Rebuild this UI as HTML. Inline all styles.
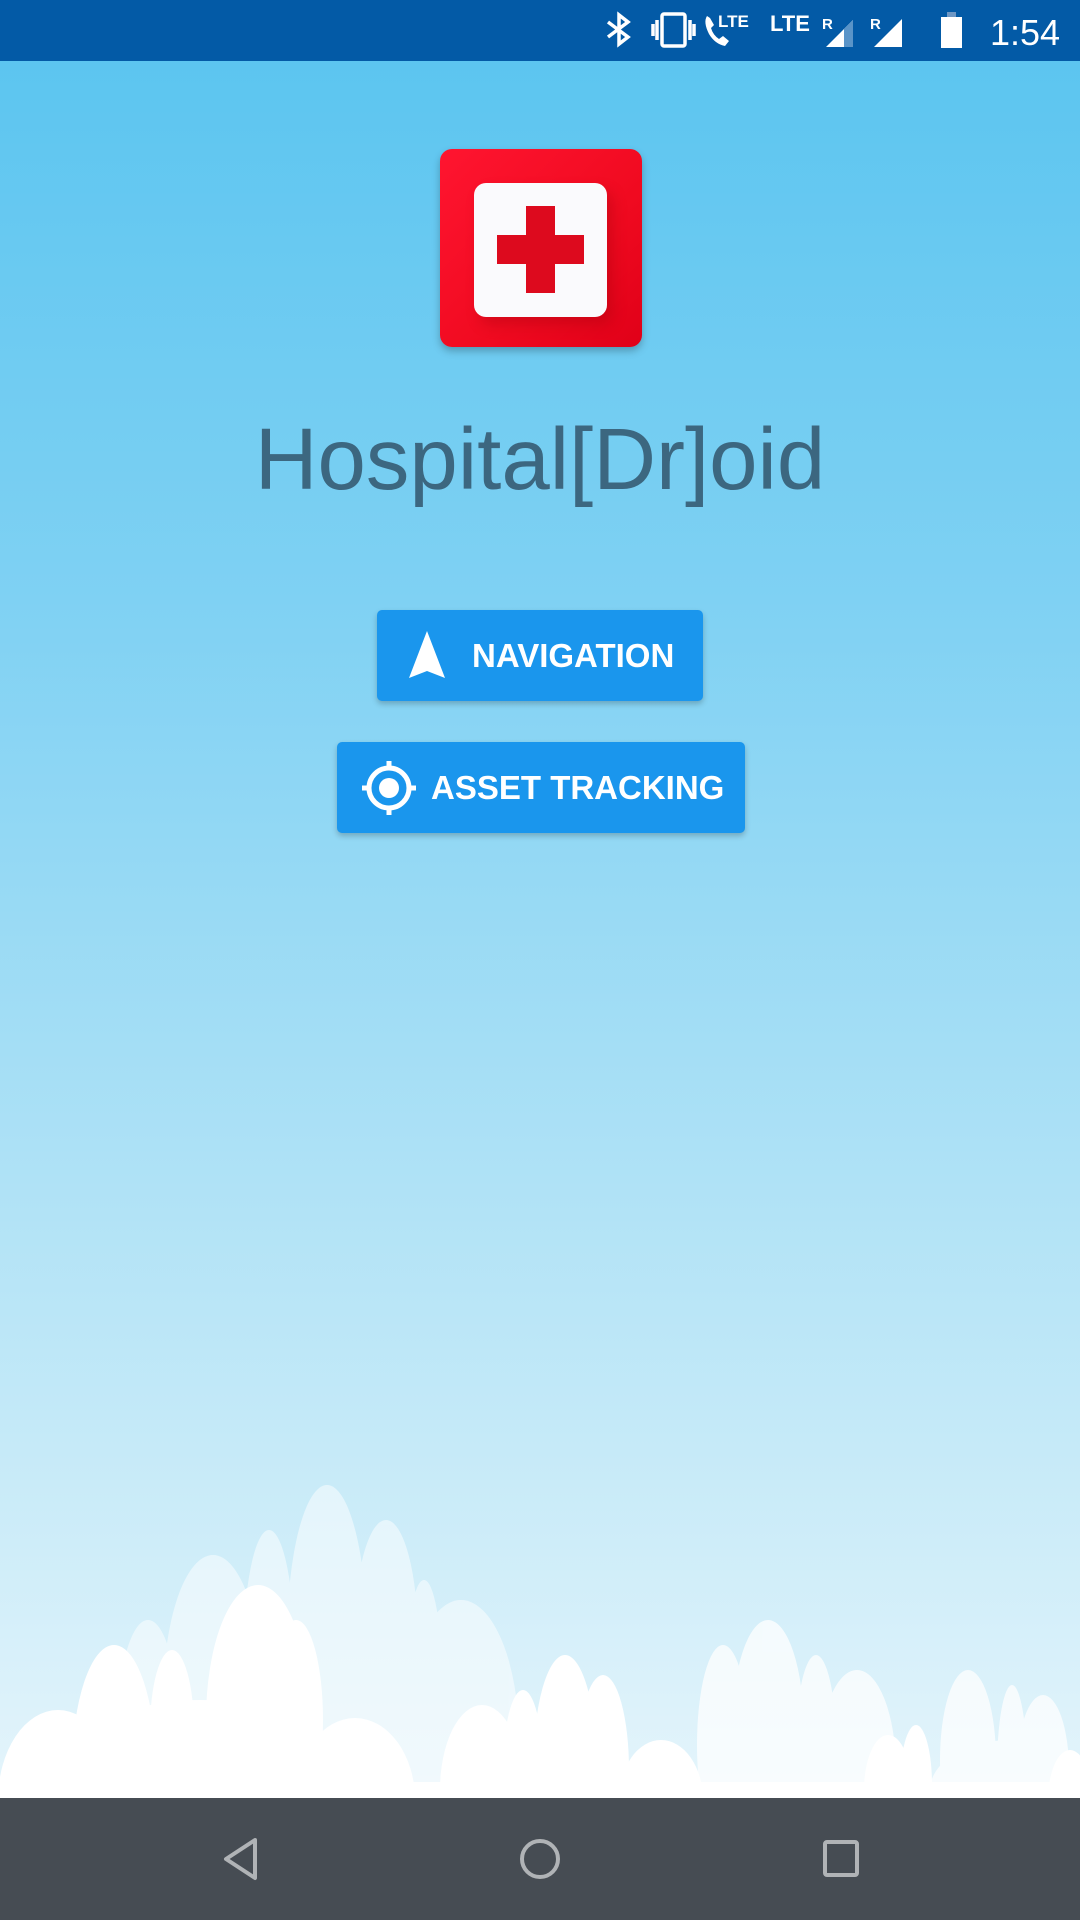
<!DOCTYPE html>
<html><head><meta charset="utf-8"><style>
html,body{margin:0;padding:0}
body{width:1080px;height:1920px;position:relative;overflow:hidden;font-family:"Liberation Sans",sans-serif;
background:linear-gradient(#5cc5f0 61px,#7fd1f3 600px,#a4def5 1050px,#c6eaf8 1450px,#e3f4fb 1780px)}
#sb{position:absolute;left:0;top:0;width:1080px;height:61px;background:#035aa6}
#nb{position:absolute;left:0;top:1798px;width:1080px;height:122px;background:#464c53}
.btn{position:absolute;background:#1a96ed;border-radius:5px;box-shadow:0 3px 6px rgba(0,0,0,0.22);color:#fff;font-weight:bold;font-size:33px}
.btn span{position:absolute;top:26px;line-height:40px;white-space:nowrap}
</style></head><body>
<div id="sb">
<svg width="1080" height="61" style="position:absolute;left:0;top:0">
<g fill="none" stroke="#fff" stroke-width="3.5">
<path d="M608 22 L628 37 L619 44 L619 15 L628 22 L608 37"/>
<rect x="662" y="14" width="23" height="32" rx="2"/>
<path d="M653 24 v12 M657 20 v20 M690 20 v20 M694 24 v12"/>
</g>
<path d="M707 16 q-4 6 2 18 q6 10 16 12 l4-5 l-6-5 l-4 3 q-6-4-8-11 l3-3 l-4-7z" fill="#fff"/>
<text x="718" y="27" fill="#fff" font-size="17" font-weight="bold" font-family="Liberation Sans">LTE</text>
<text x="770" y="31" fill="#fff" font-size="22" font-weight="bold" font-family="Liberation Sans">LTE</text>
<text x="822" y="29" fill="#fff" font-size="15" font-weight="bold" font-family="Liberation Sans">R</text>
<path d="M826 47 L853 20 L853 47Z" fill="#fff"/>
<path d="M844 29 L853 20 L853 47 L844 47Z" fill="#5a94c8"/>
<text x="870" y="29" fill="#fff" font-size="15" font-weight="bold" font-family="Liberation Sans">R</text>
<path d="M874 47 L902 19 L902 47Z" fill="#fff"/>
<rect x="941" y="17" width="21" height="31" fill="#fff"/>
<rect x="947" y="12" width="9" height="5" fill="#6e97c4"/>
<text x="990" y="45" fill="#fff" font-size="36" font-family="Liberation Sans">1:54</text>
</svg>
</div>

<svg width="1080" height="1920" style="position:absolute;left:0;top:0">
<g fill="#fff" opacity="0.5">
<ellipse cx="327" cy="1640" rx="40" ry="155"/>
<ellipse cx="269" cy="1660" rx="26" ry="130"/>
<ellipse cx="213" cy="1700" rx="50" ry="145"/>
<ellipse cx="386" cy="1640" rx="32" ry="120"/>
<ellipse cx="424" cy="1680" rx="18" ry="100"/>
<ellipse cx="461" cy="1740" rx="58" ry="140"/>
<ellipse cx="148" cy="1740" rx="32" ry="120"/>
<ellipse cx="300" cy="1720" rx="140" ry="100"/>
</g>
<g fill="#fff" opacity="0.75">
<ellipse cx="768" cy="1730" rx="36" ry="110"/>
<ellipse cx="723" cy="1745" rx="26" ry="100"/>
<ellipse cx="816" cy="1745" rx="20" ry="90"/>
<ellipse cx="857" cy="1770" rx="39" ry="100"/>
<ellipse cx="790" cy="1770" rx="90" ry="70"/>
<ellipse cx="968" cy="1760" rx="28" ry="90"/>
<ellipse cx="1012" cy="1770" rx="15" ry="85"/>
<ellipse cx="1043" cy="1770" rx="26" ry="75"/>
<ellipse cx="1010" cy="1790" rx="80" ry="50"/>
</g>
<g fill="#fff">
<ellipse cx="114" cy="1770" rx="42" ry="125"/>
<ellipse cx="172" cy="1730" rx="22" ry="80"/>
<ellipse cx="258" cy="1720" rx="52" ry="135"/>
<ellipse cx="296" cy="1720" rx="27" ry="100"/>
<ellipse cx="355" cy="1800" rx="60" ry="82"/>
<ellipse cx="58" cy="1800" rx="60" ry="90"/>
<ellipse cx="200" cy="1790" rx="150" ry="90"/>
<ellipse cx="565" cy="1770" rx="32" ry="115"/>
<ellipse cx="603" cy="1770" rx="26" ry="95"/>
<ellipse cx="482" cy="1790" rx="42" ry="85"/>
<ellipse cx="523" cy="1770" rx="20" ry="80"/>
<ellipse cx="661" cy="1800" rx="42" ry="60"/>
<ellipse cx="916" cy="1785" rx="16" ry="60"/>
<ellipse cx="888" cy="1790" rx="24" ry="55"/>
<ellipse cx="1070" cy="1800" rx="22" ry="50"/>
</g>
<rect x="0" y="1782" width="1080" height="16" fill="#fff"/>
</svg>

<div style="position:absolute;left:440px;top:149px;width:202px;height:198px;border-radius:12px;background:linear-gradient(135deg,#ff1530,#f00a20 60%,#e00018);box-shadow:0 4px 8px rgba(0,0,0,0.25)"></div>
<div style="position:absolute;left:474px;top:183px;width:133px;height:134px;border-radius:12px;background:#fafafd;box-shadow:6px 8px 14px rgba(150,0,10,0.3)"></div>
<div style="position:absolute;left:497px;top:235px;width:87px;height:29px;background:#dd0a1e"></div>
<div style="position:absolute;left:526px;top:206px;width:29px;height:87px;background:#dd0a1e"></div>

<div style="position:absolute;left:0;width:1080px;top:405px;text-align:center;font-size:87px;line-height:110px;color:#3c6780">Hospital[Dr]oid</div>

<div class="btn" style="left:377px;top:610px;width:326px;height:91px">
<svg width="40" height="50" style="position:absolute;left:30px;top:20px"><path d="M20 1 L38 48 L20 41 L2 48Z" fill="#fff"/></svg>
<span style="left:95px">NAVIGATION</span></div>
<div class="btn" style="left:337px;top:742px;width:408px;height:91px">
<svg width="60" height="60" style="position:absolute;left:22px;top:16px"><circle cx="30" cy="30" r="20" fill="none" stroke="#fff" stroke-width="5"/><circle cx="30" cy="30" r="10" fill="#fff"/><path d="M30 3v9M30 48v9M3 30h9M48 30h9" stroke="#fff" stroke-width="5"/></svg>
<span style="left:94px">ASSET TRACKING</span></div>

<div id="nb">
<svg width="1080" height="122" style="position:absolute;left:0;top:0">
<g fill="none" stroke="#b0b3b6" stroke-width="4" stroke-linejoin="round">
<path d="M255 42 L226 61 L255 80Z"/>
<circle cx="540" cy="61" r="18"/>
<rect x="825" y="44" width="32" height="33" rx="2"/>
</g></svg>
</div>
</body></html>
